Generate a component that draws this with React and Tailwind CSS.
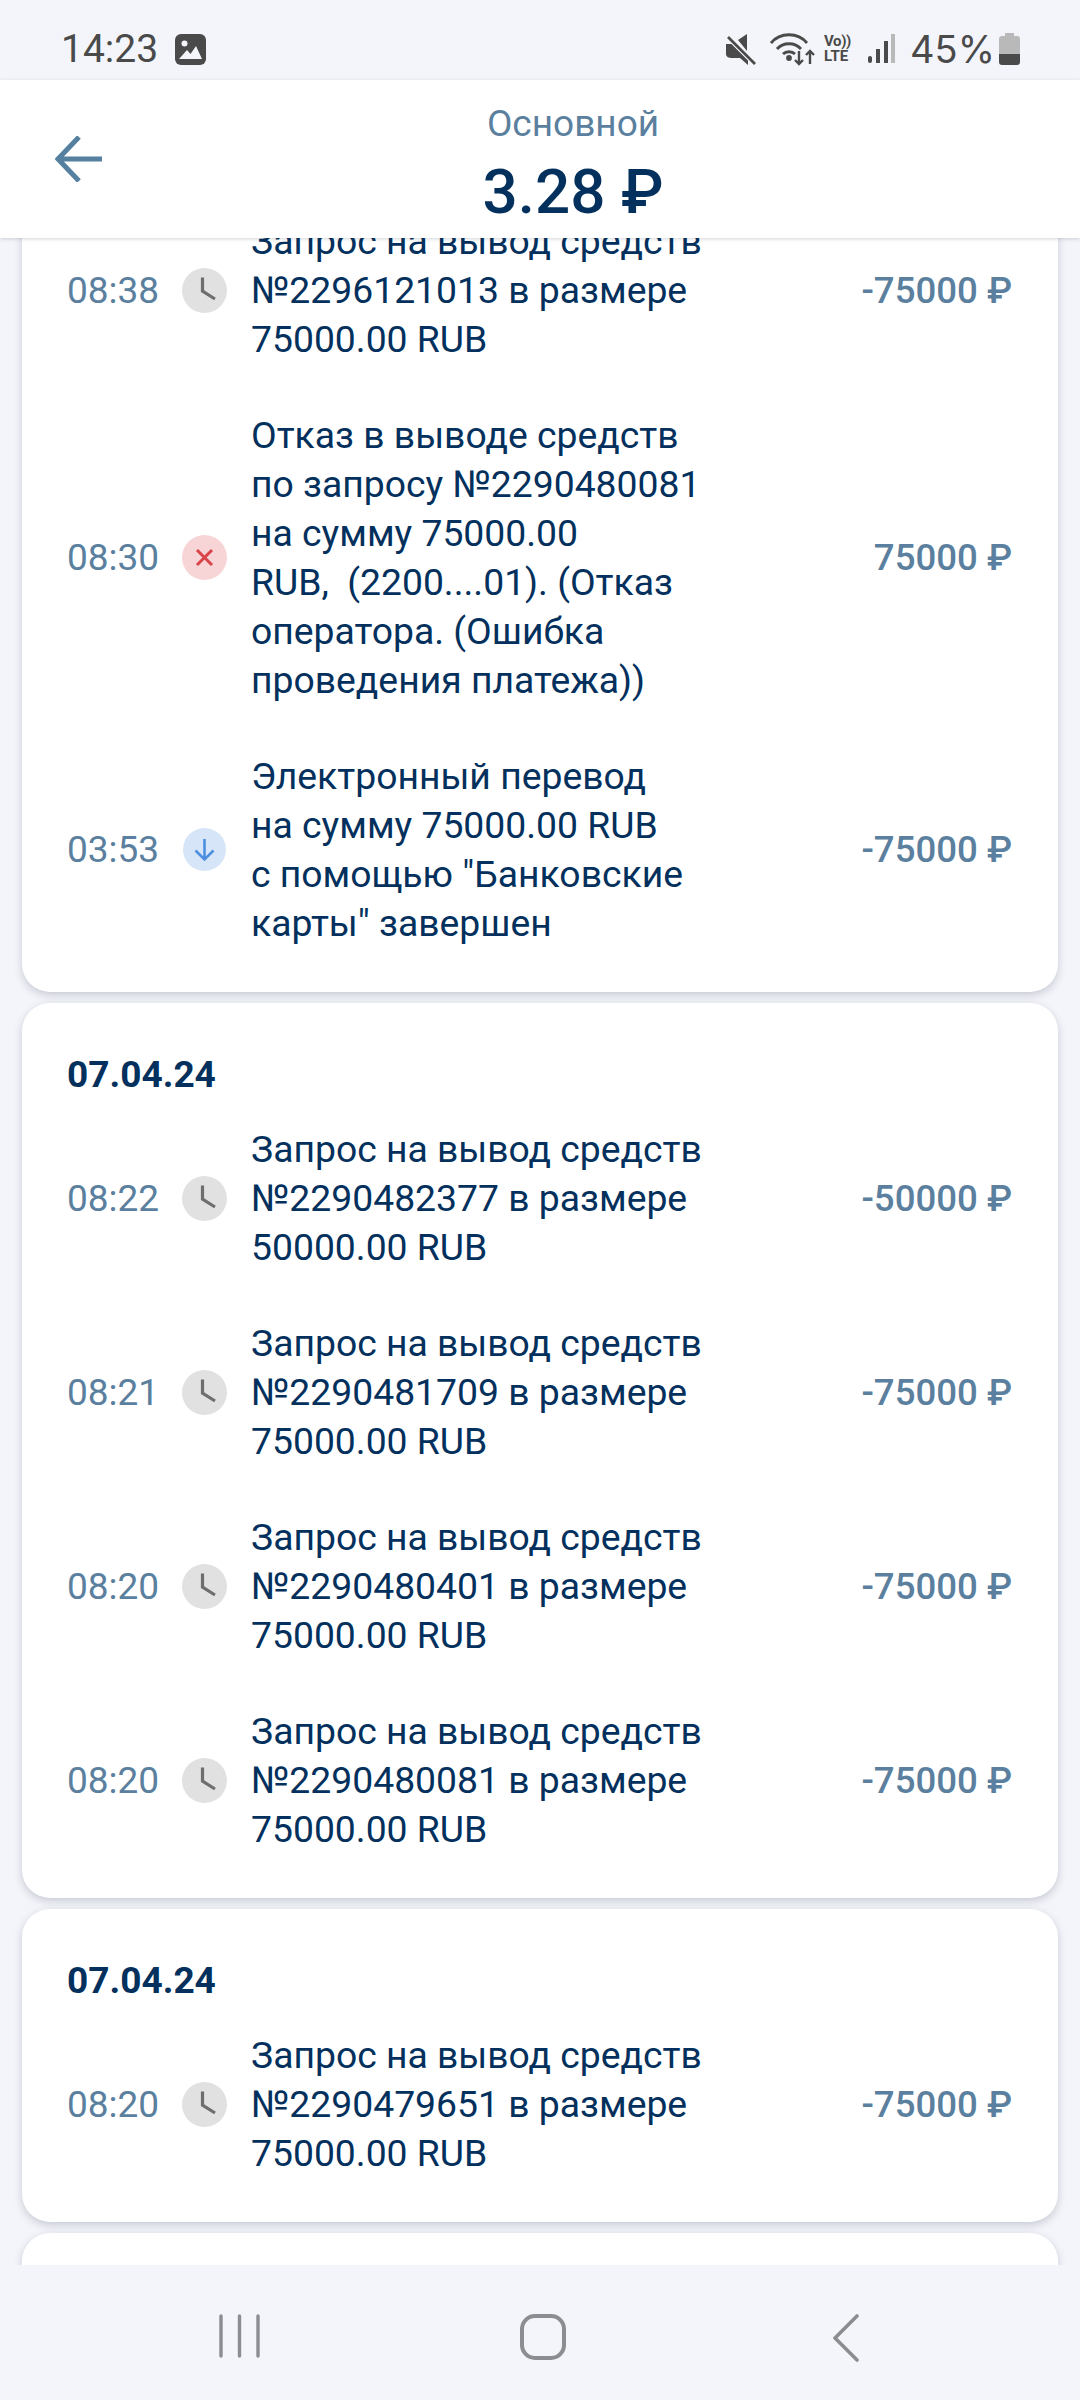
import React from "react";

const ClockIcon = () => (
  <div className="w-[45px] h-[45px] rounded-full bg-[#e1e1e1] flex items-center justify-center shrink-0">
    <svg width="45" height="45" viewBox="0 0 45 45" fill="none">
      <path d="M20.5 9.5V23L33 31" stroke="#6e6e6e" strokeWidth="3.2" />
    </svg>
  </div>
);

const RejectIcon = () => (
  <div className="w-[45px] h-[45px] rounded-full bg-[#f7d5d6] flex items-center justify-center shrink-0">
    <svg width="45" height="45" viewBox="0 0 45 45" fill="none">
      <path d="M15 15L30 30M30 15L15 30" stroke="#d9444a" strokeWidth="3" />
    </svg>
  </div>
);

const InIcon = () => (
  <div className="w-[43px] h-[43px] mx-px rounded-full bg-[#d6e5f7] flex items-center justify-center shrink-0">
    <svg width="43" height="43" viewBox="0 0 43 43" fill="none">
      <path d="M21.5 11V31M12.5 22.5L21.5 31.5L30.5 22.5" stroke="#4f8fe0" strokeWidth="2.6" />
    </svg>
  </div>
);

const icons = { wait: <ClockIcon />, reject: <RejectIcon />, in: <InIcon /> };

const Row = ({ time, icon, lines, amount }) => (
  <div className="flex items-center py-[23.5px]">
    <div className="w-[115px] text-[37px] leading-[49px] text-[#5b7f9e]">{time}</div>
    <div className="w-[69px] flex">{icons[icon]}</div>
    <div className="flex-1 text-[37.3px] leading-[49px] text-[#03305c] whitespace-pre">
      {lines.map((l, i) => (
        <div key={i}>{l}</div>
      ))}
    </div>
    <div className="text-[36.6px] leading-[49px] font-medium text-[#5b7f9e] whitespace-nowrap">{amount}</div>
  </div>
);

const Card = ({ date, rows, className = "" }) => (
  <div className={`bg-white rounded-[28px] pl-[45px] pr-[46px] pb-[21px] shadow-[0_3px_8px_rgba(40,50,80,0.22)] ${className}`}>
    {date && (
      <div className="h-[98px] pt-[50px] text-[37px] leading-[44px] font-bold text-[#03305c]">{date}</div>
    )}
    {rows.map((r, i) => (
      <Row key={i} {...r} />
    ))}
  </div>
);

const request = (num, sum) => ["Запрос на вывод средств", `№${num} в размере`, `${sum} RUB`];

const firstRows = [
  { time: "08:38", icon: "wait", lines: request("2296121013", "75000.00"), amount: "-75000 ₽" },
  {
    time: "08:30",
    icon: "reject",
    lines: [
      "Отказ в выводе средств",
      "по запросу №2290480081",
      "на сумму 75000.00",
      "RUB,  (2200....01). (Отказ",
      "оператора. (Ошибка",
      "проведения платежа))",
    ],
    amount: "75000 ₽",
  },
  {
    time: "03:53",
    icon: "in",
    lines: ["Электронный перевод", "на сумму 75000.00 RUB", 'с помощью "Банковские', 'карты" завершен'],
    amount: "-75000 ₽",
  },
];

const secondRows = [
  { time: "08:22", icon: "wait", lines: request("2290482377", "50000.00"), amount: "-50000 ₽" },
  { time: "08:21", icon: "wait", lines: request("2290481709", "75000.00"), amount: "-75000 ₽" },
  { time: "08:20", icon: "wait", lines: request("2290480401", "75000.00"), amount: "-75000 ₽" },
  { time: "08:20", icon: "wait", lines: request("2290480081", "75000.00"), amount: "-75000 ₽" },
];

const thirdRows = [
  { time: "08:20", icon: "wait", lines: request("2290479651", "75000.00"), amount: "-75000 ₽" },
];

function StatusBar() {
  return (
    <div className="h-[80px] shrink-0 flex items-center pl-[61px] pr-[60px] pt-[18px] text-[#4a4a4a]">
      <span className="text-[39px] leading-none">14:23</span>
      <svg className="ml-[17px]" width="31" height="31" viewBox="0 0 31 31">
        <rect width="31" height="31" rx="6" fill="#4a4a4a" />
        <circle cx="9.5" cy="9.5" r="3" fill="#f4f5fa" />
        <path d="M4 25L12 16L15.5 20L21 12L27 25Z" fill="#f4f5fa" />
      </svg>
      <div className="flex-1" />
      <svg width="30" height="31" viewBox="0 0 30 31" fill="#4a4a4a">
        <path d="M0 10H6L8 12L22 26V31L14 24H6C3 24 0 23 0 20ZM12 6L21 0V17Z" />
        <path d="M1 2L29 30" stroke="#f4f5fa" strokeWidth="5" />
        <path d="M2 3L29 30" stroke="#4a4a4a" strokeWidth="2.6" />
      </svg>
      <svg className="ml-[14px]" width="45" height="34" viewBox="0 0 45 34" fill="none" stroke="#4a4a4a" strokeWidth="2.8">
        <path d="M1 11C10 0 28 0 37 11" />
        <path d="M7 17C13 10 25 10 31 17" />
        <path d="M13 22C16 19 22 19 25 22" />
        <circle cx="19" cy="26" r="1.5" fill="#4a4a4a" />
        <path d="M29 19V32M25 28L29 32L33 28" strokeWidth="2.4" />
        <path d="M40 32V19M36 23L40 19L44 23" strokeWidth="2.4" />
      </svg>
      <div className="ml-[9px] w-[31px] flex flex-col items-start font-bold text-[15px] leading-[15px] text-[#4a4a4a]">
        <span className="tracking-tight">Vo))</span>
        <span>LTE</span>
      </div>
      <svg className="ml-[13px]" width="27" height="30" viewBox="0 0 27 30">
        <rect x="0" y="22" width="4" height="7" rx="2" fill="#4a4a4a" />
        <rect x="8" y="15" width="4" height="14" fill="#4a4a4a" />
        <rect x="16" y="7" width="4" height="22" fill="#4a4a4a" />
        <rect x="23" y="0" width="4" height="29" fill="#b9b9b9" />
      </svg>
      <span className="ml-[15px] w-[80px] text-[38px] leading-none font-['Inter',sans-serif] whitespace-nowrap">45%</span>
      <svg className="ml-[9px]" width="21" height="32" viewBox="0 0 21 32">
        <path d="M6 0H15V3H18C20 3 21 4 21 6V21H0V6C0 4 1 3 3 3H6Z" fill="#b9b9b9" />
        <path d="M0 21H21V29C21 31 20 32 18 32H3C1 32 0 31 0 29Z" fill="#4a4a4a" />
      </svg>
    </div>
  );
}

function Header() {
  return (
    <div className="relative z-10 h-[158px] shrink-0 bg-white flex items-center shadow-[0_1px_4px_rgba(40,50,80,0.2)]">
      <div className="w-[146px] pl-[55px] shrink-0">
        <svg width="47" height="46" viewBox="0 0 47 46" fill="none" stroke="#55809f" strokeWidth="5">
          <path d="M47 23H4M24 1L3 23L24 45" />
        </svg>
      </div>
      <div className="w-[854px] flex flex-col items-center pt-[10px]">
        <div className="text-[37px] leading-[44px] text-[#5b7f9e]">Основной</div>
        <div className="mt-[11px] text-[62px] leading-[70px] font-medium text-[#03305c]">3.28 ₽</div>
      </div>
    </div>
  );
}

function NavBar() {
  return (
    <div className="relative z-10 h-[135px] shrink-0 bg-[#f4f5fa] flex items-start pt-[49px]">
      <svg className="ml-[219px]" width="41" height="44" viewBox="0 0 41 44" stroke="#8b8d90" strokeWidth="3.4" strokeLinecap="round">
        <path d="M2 2V42M20.5 2V42M39 2V42" />
      </svg>
      <svg className="ml-[260px]" width="46" height="46" viewBox="0 0 46 46" fill="none" stroke="#8b8d90" strokeWidth="4">
        <rect x="2" y="2" width="42" height="42" rx="13" />
      </svg>
      <svg className="ml-[267px]" width="26" height="48" viewBox="0 0 26 48" fill="none" stroke="#8b8d90" strokeWidth="3.6" strokeLinecap="round" strokeLinejoin="round">
        <path d="M24 2L2 24L24 46" />
      </svg>
    </div>
  );
}

export default function App() {
  return (
    <div className="w-[1080px] h-[2400px] bg-[#f4f5fa] flex flex-col overflow-hidden font-['Roboto',sans-serif]">
      <StatusBar />
      <Header />
      <div className="flex-1 min-h-0 overflow-hidden px-[22px]">
        <div className="-mt-[45px] flex flex-col gap-[11px]">
          <Card rows={firstRows} />
          <Card date="07.04.24" rows={secondRows} />
          <Card date="07.04.24" rows={thirdRows} />
          <Card date="07.04.24" rows={[]} />
        </div>
      </div>
      <NavBar />
    </div>
  );
}
